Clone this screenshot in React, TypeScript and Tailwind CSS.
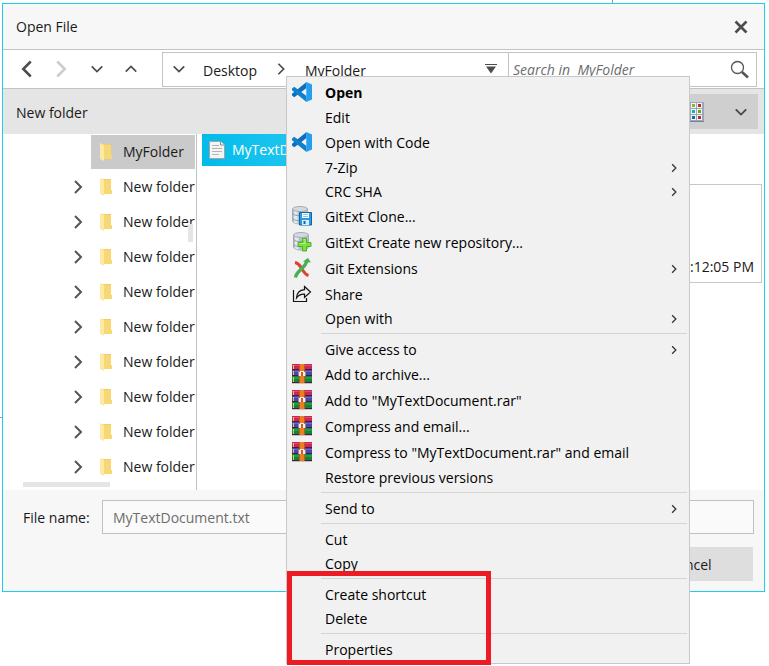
import React from "react";

type IconName = "code" | "clone" | "create" | "gitext" | "share" | "rar";

function Chevron({ dir, className }: { dir: "left" | "right" | "up" | "down"; className: string }) {
  const d = {
    left: "M11 2 5 8l6 6",
    right: "M5 2l6 6-6 6",
    up: "M2 11l6-6 6 6",
    down: "M2 5l6 6 6-6",
  }[dir];
  return (
    <svg viewBox="0 0 16 16" fill="none" stroke="currentColor" className={className} aria-hidden="true">
      <path d={d} />
    </svg>
  );
}

function CodeIcon() {
  return (
    <svg viewBox="0 0 20 20" className="h-5 w-5">
      <path d="M14.500 0v6L2.300 15.200 0 13.500v-1.700z" fill="#0b6fbd" />
      <path d="M14.500 20v-6L2.300 4.800 0 6.500v1.700z" fill="#1180cc" />
      <path d="M14.300 0 20 2.500v15L14.300 20z" fill="#22a0ef" />
    </svg>
  );
}

function Database() {
  return (
    <>
      <path d="M.5 3v12c0 1.600 3.200 3 7.500 3s7.500-1.400 7.500-3V3z" fill="#b9c2cb" stroke="#a3adb7" />
      <path d="M2 5v11.500c1 .6 2 .8 3.500 1V5z" fill="#e4e9ed" />
      <path d="M.5 7.500c1 1.500 4 2.200 7.500 2.200s6.500-.7 7.500-2.200M.5 12.500c1 1.500 4 2.200 7.500 2.200s6.500-.7 7.500-2.200" fill="none" stroke="#8f9ba6" />
      <ellipse cx="8" cy="3" rx="7.500" ry="2.500" fill="#d3dae0" stroke="#a3adb7" />
    </>
  );
}

function CloneIcon() {
  return (
    <svg viewBox="0 0 20 20" className="h-5 w-5">
      <Database />
      <path d="M7.500 6.500h12v12.500h-12z" fill="#2b9be0" stroke="#0c66a8" />
      <path d="M10 7h7v5h-7z" fill="#fff" />
      <path d="M11 8.500h5M11 10.500h5" stroke="#8cc4ea" />
      <path d="M10 14h7v5h-7z" fill="#d7ecfa" />
      <path d="M11.500 15h2v3h-2z" fill="#0c66a8" />
    </svg>
  );
}

function CreateIcon() {
  return (
    <svg viewBox="0 0 20 20" className="h-5 w-5">
      <g transform="translate(1 0)">
        <Database />
      </g>
      <path d="M10.500 6.500h4v4h4.500v4h-4.500v4.500h-4v-4.500H6v-4h4.500z" fill="#7be03a" stroke="#4fb02a" />
      <path d="M11.500 7.500h1.500v4H7.500" fill="none" stroke="#b6f58a" />
    </svg>
  );
}

function GitExtIcon() {
  return (
    <svg viewBox="0 0 20 20" className="h-5 w-5" fill="none" strokeWidth="3">
      <path d="M3 4.500c4 .5 5 3.500 7 6.500s3 5.500 6.500 6.500" stroke="#e0402c" />
      <path d="M3.500 19.500c.5-4 3.500-6 6.500-9S14 6 15 3" stroke="#45b054" strokeWidth="3.400" />
      <path d="m11 3.500 5-3.500 3 4.500z" fill="#45b054" />
    </svg>
  );
}

function ShareIcon() {
  return (
    <svg viewBox="0 0 20 20" className="h-5 w-5" fill="none" stroke="#111" strokeWidth="1.200">
      <path d="M1.500 6v11.500h13V14" />
      <path d="M12.500 2.500 18.500 8l-6 5.500v-3.300C9 10 6.500 11 4.500 14c.3-5 3.500-8 8-8.300z" />
    </svg>
  );
}

function RarIcon() {
  return (
    <svg viewBox="0 0 20 20" className="h-5 w-5" shapeRendering="crispEdges">
      <path d="M0 0h20v6H0z" fill="#c9275a" />
      <path d="M0 1h20v1H0z" fill="#dd4a74" />
      <path d="M0 6h20v6H0z" fill="#4a46ad" />
      <path d="M0 7h20v1H0z" fill="#6a66c8" />
      <path d="M0 12h20v7H0z" fill="#14833a" />
      <path d="M0 13h20v2H0z" fill="#229c48" />
      <path d="M0 5h20v1H0z M0 11h20v1H0z M0 18h20v1H0z" fill="#4a1a3c" />
      <path d="M1 1h1v4H1z M1 7h1v4H1z M1 13h1v5H1z" fill="#e8c84a" />
      <path d="M7 0h6v19H7z" fill="#c9560f" />
      <path d="M8 0h4v19H8z" fill="#ee7d22" />
      <path d="M6 7h1v5H6z M13 7h1v5h-1z" fill="#8f8a9a" />
      <path d="M7 8h2v4H7z M11 8h2v4h-2z M8 7h4v1H8z" fill="#f6eeee" />
      <path d="M9 8h2v4H9z" fill="#cf5a26" />
      <path d="M0 19h20v1H0z" fill="#bfc4c2" />
    </svg>
  );
}

const ICONS: Record<IconName, () => React.ReactElement> = {
  code: CodeIcon,
  clone: CloneIcon,
  create: CreateIcon,
  gitext: GitExtIcon,
  share: ShareIcon,
  rar: RarIcon,
};

type Item = { label: string; icon?: IconName; sub?: boolean; bold?: boolean };

const GROUPS: Item[][] = [
  [
    { label: "Open", icon: "code", bold: true },
    { label: "Edit" },
    { label: "Open with Code", icon: "code" },
    { label: "7-Zip", sub: true },
    { label: "CRC SHA", sub: true },
    { label: "GitExt Clone...", icon: "clone" },
    { label: "GitExt Create new repository...", icon: "create" },
    { label: "Git Extensions", icon: "gitext", sub: true },
    { label: "Share", icon: "share" },
    { label: "Open with", sub: true },
  ],
  [
    { label: "Give access to", sub: true },
    { label: "Add to archive...", icon: "rar" },
    { label: 'Add to "MyTextDocument.rar"', icon: "rar" },
    { label: "Compress and email...", icon: "rar" },
    { label: 'Compress to "MyTextDocument.rar" and email', icon: "rar" },
    { label: "Restore previous versions" },
  ],
  [{ label: "Send to", sub: true }],
  [{ label: "Cut" }, { label: "Copy" }],
  [{ label: "Create shortcut" }, { label: "Delete" }],
  [{ label: "Properties" }],
];

function rowHeight(item: Item) {
  if (item.icon === "share") return "h-[25px]";
  return item.icon ? "h-[26px]" : "h-6";
}

function ContextMenu() {
  return (
    <div
      role="menu"
      className="absolute left-[286px] top-[76px] w-[404px] border border-[#c8c8c8] bg-[#f1f1f1] pb-px pt-[3px] text-black"
    >
      {GROUPS.map((group, g) => (
        <div key={g} role="group">
          {g > 0 && (
            <div className="h-[7px] pl-[34px] pr-[2px] pt-[2px]">
              <div className="h-px bg-[#d4d4d4]" />
            </div>
          )}
          {group.map((item) => {
            const Icon = item.icon ? ICONS[item.icon] : null;
            return (
              <button
                key={item.label}
                type="button"
                role="menuitem"
                className={`flex w-full items-center pl-[5px] pr-[10px] text-left ${rowHeight(item)}`}
              >
                <span className="mr-[13px] h-[22px] w-5 shrink-0">{Icon && <Icon />}</span>
                <span className={`flex-1 whitespace-nowrap leading-5 ${item.bold ? "font-bold" : ""}`}>{item.label}</span>
                {item.sub && <Chevron dir="right" className="h-[10px] w-[10px] stroke-[2] text-[#333]" />}
              </button>
            );
          })}
        </div>
      ))}
    </div>
  );
}

function FolderIcon() {
  return (
    <svg viewBox="0 0 14 18" className="h-[18px] w-[14px] shrink-0" aria-hidden="true">
      <path d="M3 1h9v11h1v4H3z" fill="#f3cd62" />
      <path d="M1 0l4 2v16l-4-2z" fill="#fde8a4" />
      <path d="M5 2h7v10h1v4H5z" fill="#f8d775" />
    </svg>
  );
}

function FolderTree() {
  return (
    <div className="relative w-[194px] shrink-0 overflow-hidden border-r border-[#c3c3c3]">
      <ul>
        {["MyFolder", ...Array<string>(9).fill("New folder")].map((name, i) => (
          <li key={i} className="flex h-[35px]">
            <span className="flex w-[88px] items-center justify-end pr-[5px]">
              {i > 0 && <Chevron dir="right" className="h-4 w-4 stroke-[2] text-[#555]" />}
            </span>
            <button
              type="button"
              className={`mt-px flex h-[34px] w-[104px] items-center gap-[10px] pl-2 text-left ${i === 0 ? "bg-[#cacaca]" : ""}`}
            >
              <FolderIcon />
              <span className="whitespace-nowrap">{name}</span>
            </button>
          </li>
        ))}
      </ul>
      <div className="absolute right-[3px] top-[90px] h-[18px] w-[5px] bg-[#e5e5e5]" />
      <div className="absolute bottom-[3px] left-5 h-[5px] w-[87px] bg-[#e5e5e5]" />
    </div>
  );
}

function ViewIcon() {
  const cells = ["#8ab52c", "#c8280f", "#19b39b", "#6fa017", "#1d64a8", "#c8280f"];
  return (
    <svg viewBox="0 0 15 20" className="h-5 w-[15px]" aria-hidden="true">
      <path d="M0 0h14v20H0z" fill="#9aa8bc" />
      <path d="M0 19h14v1H0z" fill="#6f83a0" />
      {cells.map((c, i) => (
        <g key={i} transform={`translate(${1 + (i % 2) * 6} ${1 + Math.floor(i / 2) * 6})`}>
          <path d="M0 0h5v5H0z" fill="#f2f5f9" />
          <path d="M1 1h3v3H1z" fill={c} />
        </g>
      ))}
    </svg>
  );
}

function OpenDialog() {
  return (
    <section className="ml-[2px] mr-1 border border-[#1fcdf2] bg-white" aria-label="Open File">
      <header className="flex h-[46px] items-center justify-between border-b border-[#c3c3c3] bg-[#f7f7f7] pl-[13px] pr-4 pt-px">
        <h1>Open File</h1>
        <button type="button" aria-label="Close">
          <svg viewBox="0 0 14 14" className="h-[14px] w-[14px]" stroke="#4d4d4d" strokeWidth="2.600">
            <path d="M1.500 1.500l11 11M12.500 1.500l-11 11" />
          </svg>
        </button>
      </header>

      <nav className="flex h-[39px] items-center border-b border-[#c3c3c3] pr-[7px]">
        <div className="flex w-[159px] items-center pl-[14px] text-[#4d4d4d]">
          <button type="button" aria-label="Back" className="w-[34px]">
            <Chevron dir="left" className="h-5 w-5 stroke-[2]" />
          </button>
          <button type="button" aria-label="Forward" className="w-[39px] text-[#ccc]">
            <Chevron dir="right" className="h-5 w-5 stroke-[2]" />
          </button>
          <button type="button" aria-label="Recent" className="w-[34px]">
            <Chevron dir="down" className="h-[14px] w-[14px] stroke-[2]" />
          </button>
          <button type="button" aria-label="Up">
            <Chevron dir="up" className="h-[14px] w-[14px] stroke-[2]" />
          </button>
        </div>
        <div className="flex h-[35px] flex-1 items-center border border-[#c3c3c3] pl-[9px] pr-[11px]">
          <Chevron dir="down" className="mr-[17px] h-[14px] w-[14px] stroke-[2] text-[#4d4d4d]" />
          <button type="button" className="w-[71px] pt-[3px] text-left">Desktop</button>
          <Chevron dir="right" className="mr-[17px] h-[14px] w-[14px] stroke-[2] text-[#4d4d4d]" />
          <button type="button" className="flex-1 pt-[3px] text-left">MyFolder</button>
          <svg viewBox="0 0 12 10" className="mb-px h-[10px] w-3" aria-hidden="true">
            <path d="M0 .5h12" stroke="#4d4d4d" />
            <path d="M1 2.500h10L6 9.500z" fill="#4d4d4d" />
          </svg>
        </div>
        <label className="flex h-[35px] w-[248px] items-center border border-l-0 border-[#c3c3c3] pl-1 pr-[7px]">
          <input
            type="search"
            aria-label="Search"
            placeholder="Search in  MyFolder"
            className="w-full min-w-0 flex-1 whitespace-pre pt-px italic outline-none placeholder:text-[#6d6d6d]"
          />
          <svg viewBox="0 0 19 19" className="h-[19px] w-[19px] shrink-0" fill="none" stroke="#555">
            <circle cx="7.500" cy="7.500" r="6" strokeWidth="1.300" />
            <path d="M12 12l6 5.500" strokeWidth="2.600" />
          </svg>
        </label>
      </nav>

      <div className="flex h-[45px] items-center justify-between bg-[#e5e5e5] pl-[13px] pr-[6px]">
        <button type="button" className="pt-[2px]">New folder</button>
        <button type="button" aria-label="Change view" className="flex h-[35px] w-[80px] items-center justify-between bg-[#cfcfcf] pl-[12px] pr-[10px]">
          <ViewIcon />
          <Chevron dir="down" className="h-[14px] w-[14px] stroke-[2] text-[#444]" />
        </button>
      </div>

      <div className="flex h-[356px]">
        <FolderTree />
        <div className="flex min-w-0 flex-1 justify-between pl-[5px] pr-[2px]">
          <button type="button" className="flex h-8 w-[190px] items-center gap-[7px] bg-linear-to-r from-[#00bbe9] to-[#2ed0f5] pl-[7px] text-white">
            <svg viewBox="0 0 16 20" className="h-5 w-4" aria-hidden="true">
              <path d="M.5 1.500h11l4 3.500v13.500H.5z" fill="#f4f4f4" stroke="#a3a3a3" />
              <path d="M11.500 1.500V5h4" fill="#fff" stroke="#888" />
              <path d="M3 5.500h7M3 8.500h10M3 11.500h10M3 14.500h7" stroke="#b5b5b5" />
            </svg>
            MyTextDocument.txt
          </button>
          <div className="mt-[50px] flex h-[99px] w-[120px] items-end justify-end border border-[#c8c8c8] pb-[5px] pr-[7px]">
            :12:05 PM
          </div>
        </div>
      </div>

      <footer className="bg-[#f7f7f7] pb-[10px] pl-5 pr-[10px] pt-[10px]">
        <div className="flex items-center">
          <label htmlFor="filename" className="w-[79px] whitespace-nowrap pt-px">File name:</label>
          <input
            id="filename"
            defaultValue="MyTextDocument.txt"
            className="h-[34px] min-w-0 flex-1 border border-[#c0c0c0] bg-[#fafafa] px-[10px] text-[#6d6d6d] outline-none"
          />
        </div>
        <div className="mt-[13px] flex justify-end pr-px">
          <button type="button" className="h-[34px] w-[126px] bg-[#dedede] pt-[2px]">Cancel</button>
        </div>
      </footer>
    </section>
  );
}

export default function App() {
  return (
    <main className="relative min-h-screen overflow-hidden bg-white font-['Open_Sans','Noto_Sans',sans-serif] text-[14px] leading-5 text-[#1a1a1a]">
      <div className="flex h-[3px] justify-end pr-[156px]">
        <div className="w-px bg-[#999]" />
      </div>
      <div className="absolute left-0 top-[417px] h-px w-[2px] bg-[#999]" />
      <OpenDialog />
      <ContextMenu />
      <div className="pointer-events-none absolute left-[287px] top-[571px] h-[94px] w-[204px] border-[5px] border-[#ed1c24]" />
    </main>
  );
}
